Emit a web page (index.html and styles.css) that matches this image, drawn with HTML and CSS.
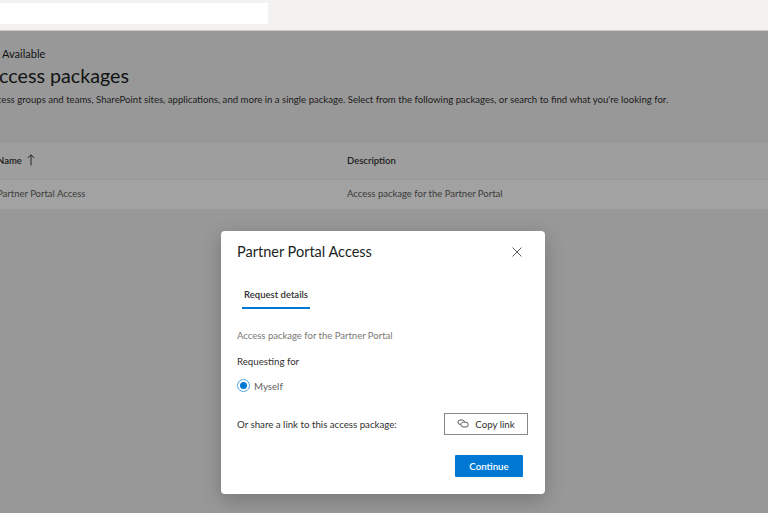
FILE: index.html
```html
<!DOCTYPE html>
<html lang="en">
<head>
<meta charset="utf-8">
<title>Access packages</title>
<link rel="stylesheet" href="styles.css">
</head>
<body>
<header class="topbar"><div class="search"></div></header>
<main class="page">
  <div class="page-inner">
    <div class="crumb">Available</div>
    <h1 class="title">Access packages</h1>
    <p class="intro">Access groups and teams, SharePoint sites, applications, and more in a single package. Select from the following packages, or search to find what you're looking for.</p>
  </div>
  <div class="table">
    <div class="row head">
      <div class="cell-name">Name
        <svg class="sort" width="8" height="12" viewBox="0 0 8 12"><path d="M4 11.500V.8M.8 4 4 .8 7.200 4" fill="none" stroke="#3a3a3a" stroke-width="1"/></svg>
      </div>
      <div class="cell-desc">Description</div>
    </div>
    <div class="row body">
      <div class="cell-name">Partner Portal Access</div>
      <div class="cell-desc">Access package for the Partner Portal</div>
    </div>
  </div>
</main>
<div class="scrim"></div>
<section class="dialog">
  <div class="dialog-head">
    <h2 class="dialog-title">Partner Portal Access</h2>
    <svg class="close" width="10" height="10" viewBox="0 0 10 10"><path d="M.5.5l9 9M9.500.5l-9 9" fill="none" stroke="#605e5c" stroke-width="1"/></svg>
  </div>
  <div class="tabs"><div class="tab">Request details</div></div>
  <p class="desc">Access package for the Partner Portal</p>
  <div class="label">Requesting for</div>
  <div class="radio-row"><span class="radio"><span class="dot"></span></span><span class="radio-label">Myself</span></div>
  <div class="share">
    <span class="share-text">Or share a link to this access package:</span>
    <button class="copy">
      <svg width="12" height="9" viewBox="0 0 12 9"><path d="M5 1H3.200a2.200 2.200 0 0 0 0 4.400H4M6.500 3.200h2.300a2.400 2.400 0 0 1 0 4.800H6.200a2.400 2.400 0 0 1-2.300-2.400M3.900 5.400c0-1.200 1-2.200 2.600-2.200M5 1c1.300 0 2.300.8 2.500 2" fill="none" stroke="#484644" stroke-width=".9"/></svg>
      <span>Copy link</span>
    </button>
  </div>
  <div class="actions"><button class="primary">Continue</button></div>
</section>
</body>
</html>
```
FILE: styles.css
```css
* { box-sizing: border-box; }
html, body { margin: 0; height: 100%; }
body {
  position: relative;
  width: 768px;
  height: 513px;
  overflow: hidden;
  background: #eeeeee;
  color: #323130;
  font-family: "Lato", "Open Sans", sans-serif;
  font-size: 9.700px;
}
.topbar { height: 31px; background: #f3f2f1; padding-top: 3px; border-bottom: 1px solid #c8c8c6; }
.search { width: 268px; height: 21px; background: #fff; }
.page-inner { padding-top: 15px; margin-left: -14px; white-space: nowrap; }
.crumb { margin-left: 16px; font-size: 11px; line-height: 15px; color: #201f1e; }
.title { margin: 1px 0 0; font-size: 19.700px; line-height: 27px; font-weight: 400; color: #201f1e; }
.intro { margin: 4px 0 0; font-size: 9.600px; line-height: 14px; color: #323130; }
.table { margin-top: 36px; }
.row { display: flex; align-items: center; }
.head { height: 37px; background: #f7f7f7; font-weight: 600; font-size: 9.500px; padding-bottom: 2px; border-bottom: 1px solid #f0f0f0; }
.body { height: 29px; background: #fdfdfd; color: #605e5c; font-size: 9.500px; padding-bottom: 3px; }
.cell-name { width: 347px; margin-left: -3px; flex: none; display: flex; align-items: center; gap: 5px; }
.cell-desc { margin-left: 3px; }
.sort { display: block; }
.scrim { position: absolute; inset: 31px 0 0; background: rgba(0, 0, 0, .36); }
.dialog {
  position: absolute;
  left: 220.500px;
  top: 230.500px;
  width: 324px;
  height: 263px;
  padding: 0 16.500px;
  background: #fff;
  border-radius: 4px;
  box-shadow: 0 6px 20px rgba(0, 0, 0, .22);
}
.dialog-head { display: flex; justify-content: space-between; align-items: center; height: 41.500px; padding-right: 6px; }
.dialog-title { margin: 0; font-size: 14.500px; font-weight: 400; color: #201f1e; }
.close { display: block; margin-top: 1px; }
.tabs { margin-top: 13.500px; padding-left: 5px; }
.tab { display: inline-block; width: 68px; height: 23px; font-weight: 600; font-size: 9.500px; text-align: center; line-height: 17px; white-space: nowrap; border-bottom: 2px solid #0078d4; }
.desc { margin: 20.500px 0 0; line-height: 14px; font-size: 9.500px; color: #797775; }
.label { margin-top: 11px; line-height: 14px; color: #323130; }
.radio-row { display: flex; align-items: center; gap: 4px; margin-top: 10.500px; height: 14px; }
.radio { display: flex; align-items: center; justify-content: center; width: 13px; height: 13px; border: 1px solid #4da3e0; border-radius: 50%; }
.dot { width: 7.500px; height: 7.500px; border-radius: 50%; background: #0078d4; }
.radio-label { color: #605e5c; }
.share { display: flex; justify-content: space-between; align-items: center; margin-top: 20px; }
.copy {
  display: flex;
  align-items: center;
  justify-content: center;
  gap: 6px;
  width: 84px;
  height: 22px;
  padding: 0;
  background: #fff;
  border: 1px solid #8a8886;
  color: #323130;
  font: inherit;
}
.actions { display: flex; justify-content: flex-end; margin-top: 20px; padding-right: 5px; }
.primary { width: 68px; height: 22px; padding: 0; background: #0078d4; border: 0; border-radius: 1px; color: #fff; font: inherit; font-weight: 600; }
```
